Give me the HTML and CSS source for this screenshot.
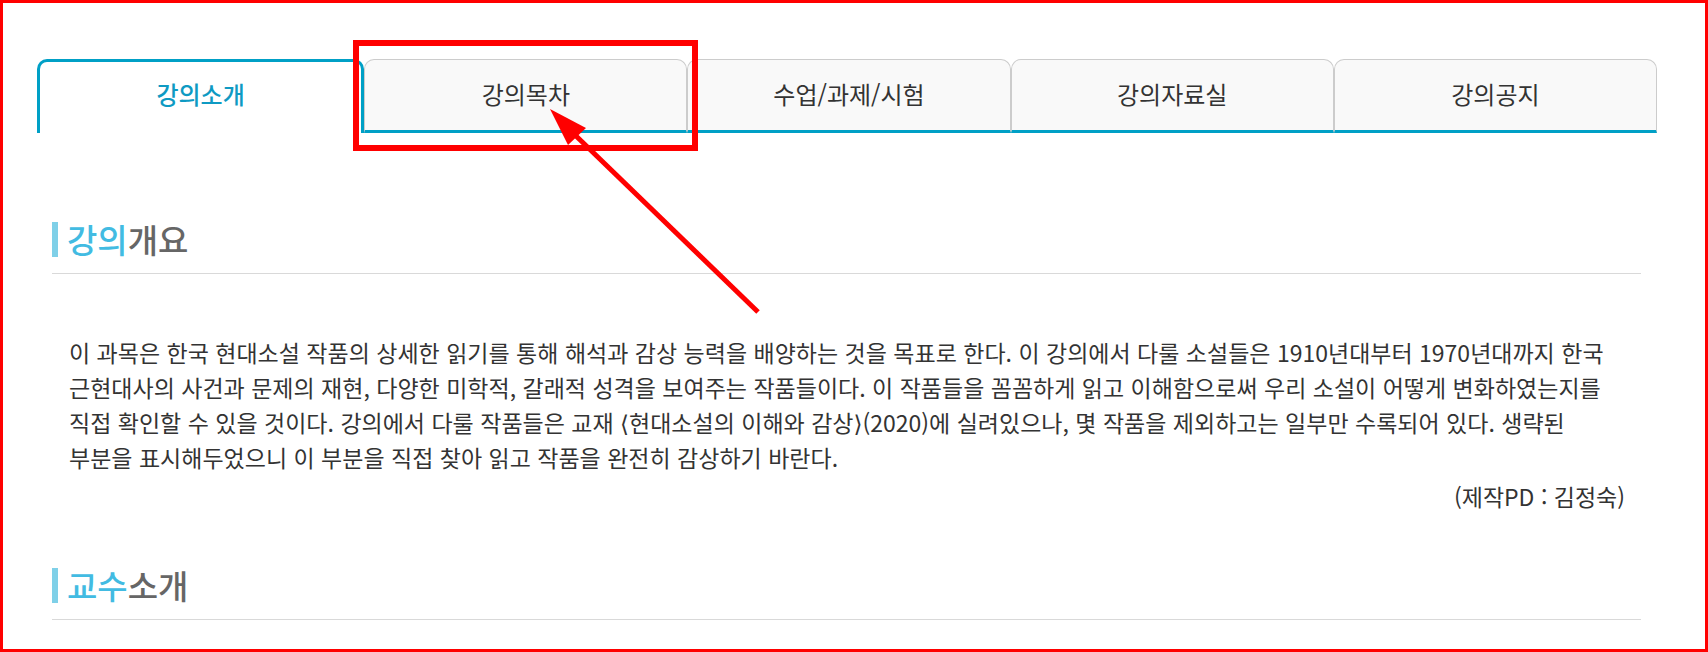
FILE: index.html
```html
<!DOCTYPE html>
<html lang="ko">
<head>
  <meta charset="UTF-8" />
  <meta name="viewport" content="width=device-width, initial-scale=1.0"/>
  <title>강의소개</title>
  <link rel="stylesheet" href="styles.css">
</head>
<body>
  <div class="wrap">
    <ul class="tab-menu">
      <li class="on">강의소개</li>
      <li>강의목차</li>
      <li>수업/과제/시험</li>
      <li>강의자료실</li>
      <li>강의공지</li>
    </ul>

    <div class="content">
      <h2 class="sub-title"><em>강의</em>개요</h2>
      <p class="txt-box">이 과목은 한국 현대소설 작품의 상세한 읽기를 통해 해석과 감상 능력을 배양하는 것을 목표로 한다. 이 강의에서 다룰 소설들은 1910년대부터 1970년대까지 한국 근현대사의 사건과 문제의 재현, 다양한 미학적, 갈래적 성격을 보여주는 작품들이다. 이 작품들을 꼼꼼하게 읽고 이해함으로써 우리 소설이 어떻게 변화하였는지를 직접 확인할 수 있을 것이다. 강의에서 다룰 작품들은 교재 ⟨현대소설의 이해와 감상⟩(2020)에 실려있으나, 몇 작품을 제외하고는 일부만 수록되어 있다. 생략된 부분을 표시해두었으니 이 부분을 직접 찾아 읽고 작품을 완전히 감상하기 바란다.</p>
      <p class="maker">(제작PD : 김정숙)</p>

      <h2 class="sub-title"><em>교수</em>소개</h2>
    </div>
  </div>

  <!-- 캡처 표시 -->
  <svg class="note" width="1708" height="652" viewBox="0 0 1708 652">
    <rect x="356" y="43" width="339" height="105" fill="none" stroke="#ff0000" stroke-width="6"/>
    <line x1="758" y1="312" x2="574" y2="134" stroke="#ff0000" stroke-width="5"/>
    <polygon points="550,109 568,145 586,128" fill="#ff0000"/>
  </svg>
</body>
</html>
```

FILE: styles.css
```css
* {
  box-sizing: border-box;
}

html, body {
  margin: 0;
  height: 100%;
}

body {
  position: relative;
  border: 3px solid #ff0000;
  overflow: hidden;
  background: #fff;
  font-family: "Noto Sans CJK KR", "Noto Sans", "DejaVu Sans", sans-serif;
  color: #333;
}

.wrap {
  padding: 56px 48px 0 34px;
}

/* 탭 메뉴 */
.tab-menu {
  display: flex;
  margin: 0;
  padding: 0;
  list-style: none;
}

.tab-menu li {
  flex: 1;
  height: 74px;
  display: flex;
  align-items: center;
  justify-content: center;
  padding-bottom: 4px;
  background: #f9f9f9;
  border: 1px solid #cccccc;
  border-bottom: 3px solid #00a0c6;
  border-radius: 10px 10px 0 0;
  font-size: 24px;
  color: #333;
}

.tab-menu li.on {
  background: #fff;
  border: 3px solid #00a0c6;
  border-bottom: none;
  color: #0e9ac3;
  font-weight: 500;
  padding-bottom: 8px;
}

/* 본문 */
.content {
  padding: 89px 16px 0 15px;
}

.sub-title {
  margin: 0;
  padding-bottom: 16px;
  border-bottom: 1px solid #d9d9d9;
  font-size: 33px;
  font-weight: 500;
  line-height: 35px;
  color: #666;
  display: flex;
}

.sub-title::before {
  content: "";
  width: 6px;
  height: 35px;
  margin-right: 9px;
  background: #7fd0e8;
}

.sub-title em {
  font-style: normal;
  color: #42bbe2;
}

.txt-box {
  margin: 61px 0 0;
  padding: 0 16px 0 17px;
  font-size: 23px;
  line-height: 35px;
  word-break: keep-all;
}

.maker {
  margin: 4px 0 54px;
  padding-right: 16px;
  text-align: right;
  font-size: 23px;
  line-height: 35px;
}

.note {
  position: absolute;
  top: -3px;
  left: -3px;
  pointer-events: none;
}
```
